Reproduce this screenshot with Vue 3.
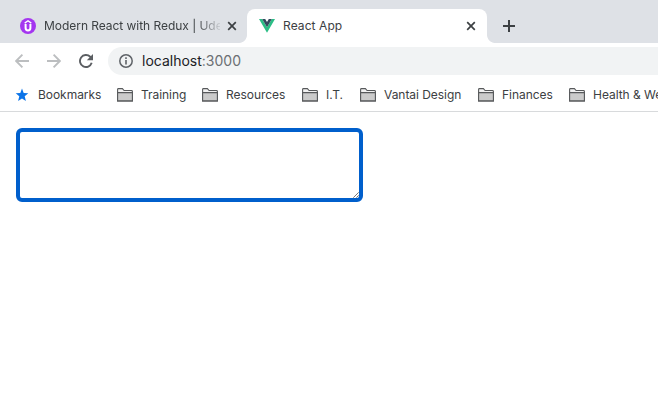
<script setup>
const folders = ['Training', 'Resources', 'I.T.', 'Vantai Design', 'Finances', 'Health & Wellness']
</script>

<template>
  <div class="browser">
    <div class="tabs">
      <div class="tab">
        <svg class="favicon" width="16" height="16" viewBox="0 0 16 16">
          <circle cx="8" cy="8" r="8" fill="#a435f0" />
          <path d="M4.7 5.1 8 2.8l3.3 2.3" fill="none" stroke="#fff" stroke-width="1.4" />
          <path d="M5.6 6v4a2.4 2.4 0 0 0 4.8 0V6" fill="none" stroke="#fff" stroke-width="2" />
        </svg>
        <span class="title faded">Modern React with Redux | Udemy</span>
        <svg class="close" width="10" height="10" viewBox="0 0 10 10"><path d="m1.2 1.2 7.6 7.6m0-7.6L1.2 8.8" /></svg>
      </div>
      <div class="tab active">
        <svg class="favicon" width="16" height="16" viewBox="0 0 16 16">
          <path d="M0 1h3.2L8 9.3 12.8 1H16L8 14.8z" fill="#2bbd85" />
          <path d="M3.2 1h3L8 4.1 9.8 1h3L8 9.3z" fill="#34495e" />
        </svg>
        <span class="title">React App</span>
        <svg class="close" width="10" height="10" viewBox="0 0 10 10"><path d="m1.2 1.2 7.6 7.6m0-7.6L1.2 8.8" /></svg>
      </div>
      <svg class="plus" width="12" height="12" viewBox="0 0 12 12"><path d="M6 0v12M0 6h12" /></svg>
    </div>

    <div class="toolbar">
      <svg class="arrow" width="14" height="14" viewBox="0 0 14 14"><path d="M14 7H1M7.4.7 1.1 7l6.3 6.3" /></svg>
      <svg class="arrow" width="14" height="14" viewBox="0 0 14 14"><path d="M0 7h13M6.6.7 12.9 7l-6.3 6.3" /></svg>
      <svg class="reload" width="14" height="14" viewBox="0 0 14 14">
        <path d="M12.7 8.8A6 6 0 1 1 11.2 2.7L12.3 3.9" fill="none" stroke="#5b5e62" stroke-width="1.9" />
        <path d="M14 0v6.2H7.8z" fill="#5b5e62" />
      </svg>
      <div class="address">
        <svg width="14" height="14" viewBox="0 0 14 14">
          <circle cx="7" cy="7" r="6.2" fill="none" stroke="#5f6368" stroke-width="1.5" />
          <path d="M6.2 3.3h1.6v1.6H6.2zM6.2 6.1h1.6v4.5H6.2z" fill="#5f6368" />
        </svg>
        <span class="url">localhost<span class="port">:3000</span></span>
      </div>
    </div>

    <nav class="bookmarks">
      <div class="bookmark">
        <svg width="16" height="14" viewBox="0 0 16 14">
          <path d="m8 .5 1.7 4.4 4.6.3-3.6 3 1.2 4.8L8 10.4 4.1 13l1.2-4.8-3.6-3 4.6-.3z" fill="#0b74e8" />
        </svg>
        <span>Bookmarks</span>
      </div>
      <div v-for="name in folders" :key="name" class="bookmark">
        <svg width="16" height="14" viewBox="0 0 16 14">
          <path d="M.6 12.9V1.4Q.6.6 1.4.6h4l1.7 1.9h7.4q.9 0 .9.9v9.5z" fill="#f2f2f2" stroke="#57595b" stroke-width="1.1" />
          <path d="M.6 4.6h14.8v8.3H.6z" fill="#cbcbcb" stroke="#57595b" stroke-width="1.1" />
        </svg>
        <span>{{ name }}</span>
      </div>
    </nav>

    <main class="page">
      <div class="field-box">
        <textarea class="field" aria-label="Text"></textarea>
        <svg class="grip" width="6" height="6" viewBox="0 0 6 6"><path d="M.3 5.7 5.7.3M3.3 5.7l2.4-2.4" /></svg>
      </div>
    </main>
  </div>
</template>

<style>
body {
  margin: 0;
  background: #fff;
}
</style>

<style scoped>
.browser {
  width: 658px;
  height: 418px;
  overflow: hidden;
  font: 12px/16px Inter, "Liberation Sans", sans-serif;
  color: #3c4043;
}
svg {
  display: block;
  flex: none;
}
.tabs {
  display: flex;
  align-items: flex-end;
  height: 43px;
  background: #dee1e6;
}
.tab {
  position: relative;
  box-sizing: border-box;
  display: flex;
  align-items: center;
  width: 240px;
  height: 34px;
  padding: 0 11px 0 12px;
}
.tab:first-child {
  width: 247px;
  padding: 0 10px 0 20px;
}
.active {
  background: #fff;
  border-radius: 8px 8px 0 0;
}
.active::before,
.active::after {
  content: "";
  position: absolute;
  bottom: 0;
  width: 8px;
  height: 8px;
}
.active::before {
  right: 100%;
  background: radial-gradient(circle at 0 0, transparent 7.5px, #fff 8.3px);
}
.active::after {
  left: 100%;
  background: radial-gradient(circle at 100% 0, transparent 7.5px, #fff 8.3px);
}
.title {
  flex: 1;
  margin: 0 7px 0 8px;
  overflow: hidden;
  white-space: nowrap;
  letter-spacing: 0.08px;
}
.faded {
  letter-spacing: -0.04px;
  mask-image: linear-gradient(to right, #000 152px, transparent 179px);
}
.close,
.plus {
  fill: none;
  stroke: #3c4043;
  stroke-width: 1.7;
}
.plus {
  margin: 0 0 11px 16px;
  stroke-width: 2;
}
.toolbar {
  display: flex;
  align-items: center;
  height: 36px;
  padding-left: 15px;
}
.arrow {
  margin-right: 18px;
  fill: none;
  stroke: #bcbec0;
  stroke-width: 1.9;
}
.address {
  box-sizing: border-box;
  display: flex;
  align-items: center;
  flex: 1;
  height: 28px;
  margin-left: 15px;
  padding-left: 11px;
  border-radius: 14px 0 0 14px;
  background: #f1f3f4;
}
.url {
  margin-left: 9px;
  font-size: 14px;
  color: #202124;
}
.port {
  color: #6b6f73;
}
.bookmarks {
  box-sizing: border-box;
  display: grid;
  grid-template-columns: 103px 85px 100px 58px 118px 91px 120px;
  align-items: center;
  height: 33px;
  padding-left: 14px;
  border-bottom: 1px solid #d8dadc;
}
.bookmark {
  display: flex;
  align-items: center;
  gap: 8px;
  white-space: nowrap;
  letter-spacing: -0.04px;
}
.page {
  padding: 16px;
}
.field-box {
  position: relative;
  width: 347px;
}
.field {
  box-sizing: border-box;
  display: block;
  width: 100%;
  height: 74px;
  border: 4px solid #005fcc;
  border-radius: 6px;
  outline: none;
  resize: none;
  background: #fff;
}
.grip {
  position: absolute;
  right: 4px;
  bottom: 4px;
  fill: none;
  stroke: #555;
  stroke-width: 0.8;
}
</style>
